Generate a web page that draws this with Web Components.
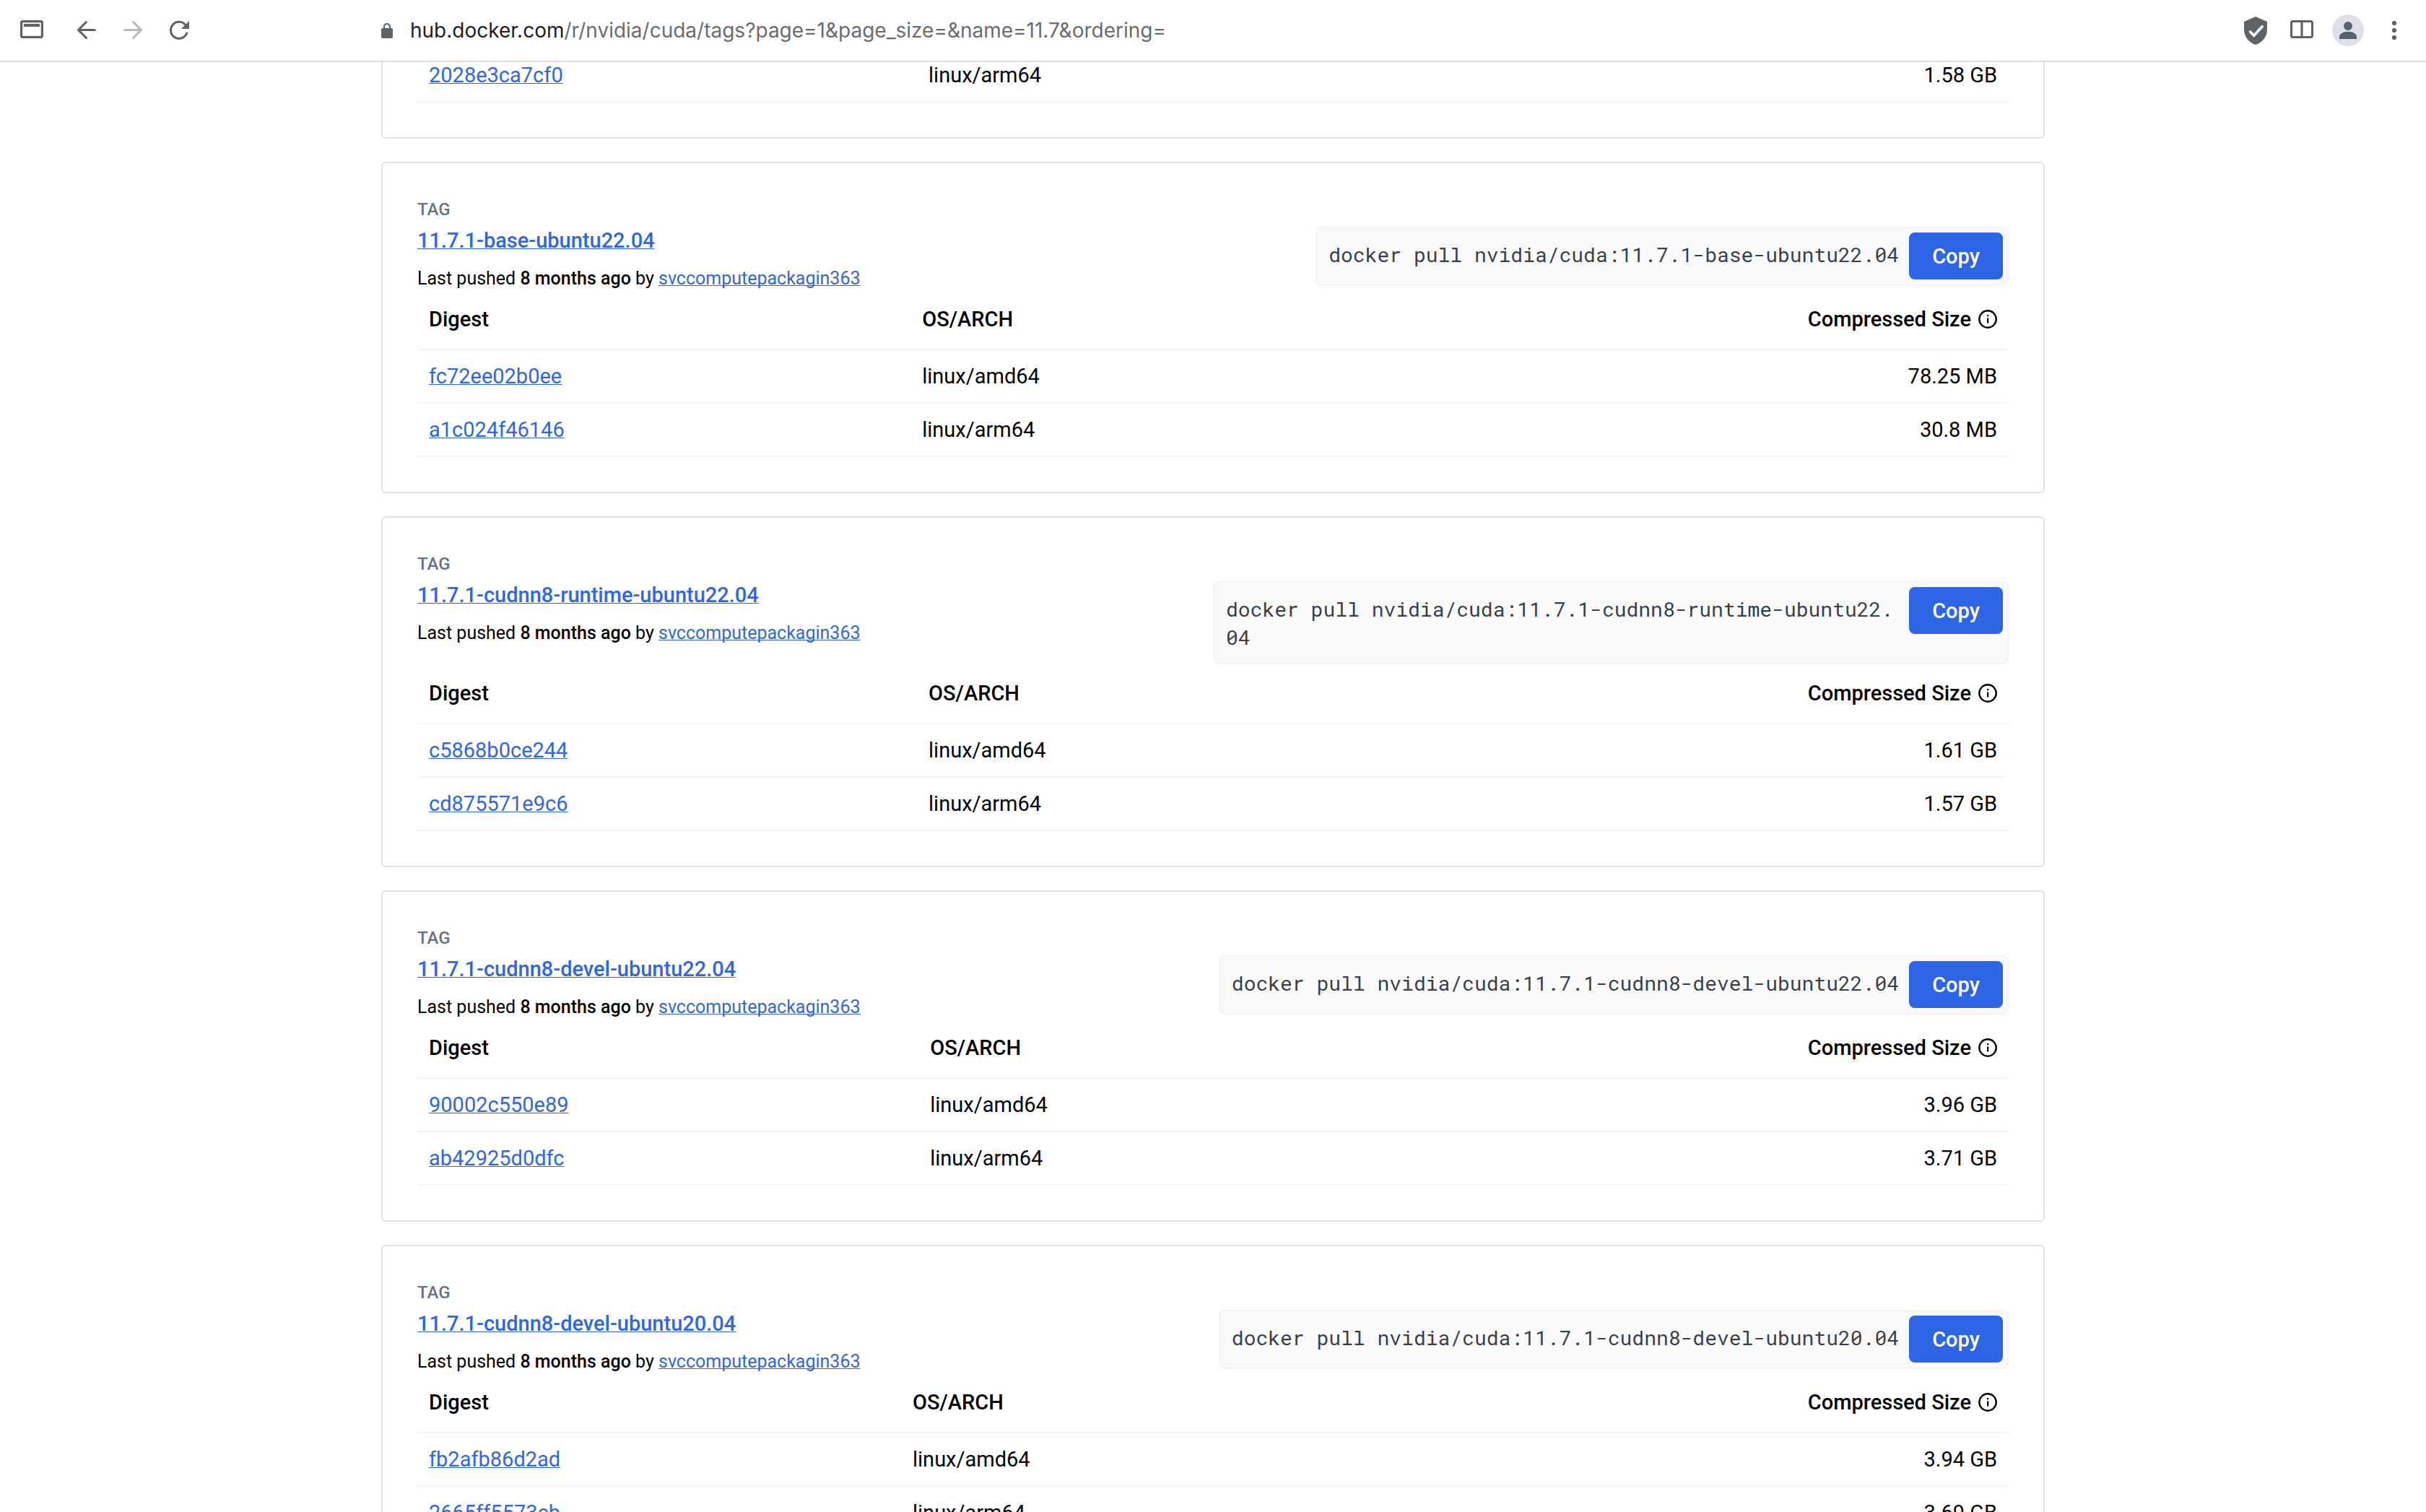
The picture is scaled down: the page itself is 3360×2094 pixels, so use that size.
<!DOCTYPE html>
<html lang="en">
<head>
<meta charset="utf-8">
<title>nvidia/cuda Tags | Docker Hub</title>
<style>
  html, body { margin: 0; height: 100%; background: #fff; }
  body {
    font-family: Roboto, "Liberation Sans", sans-serif;
    font-size: 29px; line-height: 40px; color: #000;
    --link: #2f66e8; --line: #f4f4f6; --card-line: #e0e1e7; --content: 2304px;
  }
</style>
</head>
<body>
<hub-window>
  <browser-bar slot="bar" host="hub.docker.com" path="/r/nvidia/cuda/tags?page=1&amp;page_size=&amp;name=11.7&amp;ordering="></browser-bar>
</hub-window>

<script>
const TAGS = [
  { partial: true, col: '31.4%', rows: [['2028e3ca7cf0', 'linux/arm64', '1.58 GB']] },
  { name: '11.7.1-base-ubuntu22.04', col: '31%', rows: [['fc72ee02b0ee', 'linux/amd64', '78.25 MB'], ['a1c024f46146', 'linux/arm64', '30.8 MB']] },
  { name: '11.7.1-cudnn8-runtime-ubuntu22.04', col: '31.4%', rows: [['c5868b0ce244', 'linux/amd64', '1.61 GB'], ['cd875571e9c6', 'linux/arm64', '1.57 GB']] },
  { name: '11.7.1-cudnn8-devel-ubuntu22.04', col: '31.5%', rows: [['90002c550e89', 'linux/amd64', '3.96 GB'], ['ab42925d0dfc', 'linux/arm64', '3.71 GB']] },
  { name: '11.7.1-cudnn8-devel-ubuntu20.04', col: '30.4%', rows: [['fb2afb86d2ad', 'linux/amd64', '3.94 GB'], ['2665ff5573cb', 'linux/arm64', '3.69 GB']] }
];

class BrowserBar extends HTMLElement {
  constructor() {
    super();
    const root = this.attachShadow({ mode: 'open' });
    root.innerHTML = `
      <style>
        :host { display: grid; grid-template-columns: 1fr minmax(0, var(--content)) 1fr; align-items: center;
                height: 84px; border-bottom: 2px solid #dcdcde; background: #fff; color: #5f6368; }
        nav, .tools { display: flex; align-items: center; gap: 32px; }
        nav { padding-left: 28px; }
        nav button:first-child { margin-right: 12px; }
        .tools { justify-content: flex-end; gap: 26px; padding-right: 28px; }
        .tools button:first-child { margin-right: 6px; }
        button { all: unset; display: block; cursor: pointer; }
        button:disabled { color: #bababc; }
        svg { display: block; }
        .address { display: flex; align-items: center; gap: 24px; min-width: 0; }
        .url { font-size: 28px; line-height: 40px; white-space: nowrap; color: #6b6c6f;
               font-family: Inter, Roboto, sans-serif; }
        .host { color: #202124; }
      </style>
      <nav aria-label="Browser">
        <button aria-label="Window"><svg width="32" height="44" viewBox="28 20 32 44"><rect x="29.600" y="29.600" width="28.800" height="21.800" rx="2" fill="none" stroke="currentColor" stroke-width="3.200"/><path d="M33 33h22v4h-22z" fill="currentColor"/></svg></button>
        <button aria-label="Back"><svg width="32" height="44" viewBox="104 20 32 44" fill="none" stroke="currentColor" stroke-width="3" stroke-linecap="round"><path d="M131.500 41.500H109M119.500 30.500L108.500 41.500L119.500 52.500"/></svg></button>
        <button aria-label="Forward" disabled><svg width="32" height="44" viewBox="168 20 32 44" fill="none" stroke="currentColor" stroke-width="3" stroke-linecap="round"><path d="M172.500 41.500H195M184.500 30.500L195.500 41.500L184.500 52.500"/></svg></button>
        <button aria-label="Reload"><svg width="32" height="44" viewBox="232 20 32 44"><path d="M257 34.700A11.500 11.500 0 1 0 258.700 46" fill="none" stroke="currentColor" stroke-width="3" stroke-linecap="round"/><path d="M262 29v11h-11z" fill="currentColor"/></svg></button>
      </nav>
      <div class="address">
        <svg width="16" height="44" viewBox="528 20 16 44"><rect x="528" y="39" width="16" height="14" rx="2" fill="currentColor"/><path d="M532 40v-3a4 4 0 0 1 8 0v3" fill="none" stroke="currentColor" stroke-width="2.200"/></svg>
        <div class="url" role="textbox" aria-label="Address" tabindex="0"><span class="host"></span><span class="path"></span></div>
      </div>
      <div class="tools">
        <button aria-label="Protection"><svg width="32" height="44" viewBox="3108 20 32 44"><path d="M3124 23l16 7v11c0 10-7 18-16 21c-9-3-16-11-16-21v-11z" fill="currentColor"/><path d="M3116.500 44l5.200 5.200l11.500-12.400" fill="none" stroke="#fff" stroke-width="3.600" stroke-linecap="round"/></svg></button>
        <button aria-label="Side panel"><svg width="32" height="44" viewBox="3172 20 32 44"><path d="M3175.500 29.500h25a2 2 0 0 1 2 2v18a2 2 0 0 1-2 2h-25a2 2 0 0 1-2-2v-18a2 2 0 0 1 2-2zM3188 29.500v22" fill="none" stroke="currentColor" stroke-width="3.200"/></svg></button>
        <button aria-label="Profile"><svg width="44" height="44" viewBox="0 0 44 44"><circle cx="22" cy="22" r="22" fill="#dfe0e6"/><circle cx="22" cy="16" r="6" fill="#586073"/><path d="M10 34v-3c0-4.500 6-7.300 12-7.300s12 2.800 12 7.300v3z" fill="#586073"/></svg></button>
        <button aria-label="Menu"><svg width="32" height="44" viewBox="3300 20 32 44" fill="currentColor"><circle cx="3316" cy="32" r="3.100"/><circle cx="3316" cy="42" r="3.100"/><circle cx="3316" cy="52" r="3.100"/></svg></button>
      </div>`;
  }
  connectedCallback() {
    this.shadowRoot.querySelector('.host').textContent = this.getAttribute('host');
    this.shadowRoot.querySelector('.path').textContent = this.getAttribute('path');
  }
}

class PullCommand extends HTMLElement {
  constructor() {
    super();
    this.attachShadow({ mode: 'open' }).innerHTML = `
      <style>
        :host { display: flex; align-items: flex-start; gap: 14px; box-sizing: border-box; max-width: 50%;
                margin-top: 40px; padding: 6px 6px 7px 16px; border: 2px solid #f3f3f4; border-radius: 8px; background: #f9f9fa; }
        code { padding: 11px 0 9px; font: 28px/39px "Roboto Mono", "Liberation Mono", monospace; color: #393f49; word-break: break-all; }
        button { flex: none; width: 130px; height: 65px; padding: 0; border: 0; border-radius: 8px;
                 background: #2e65e5; color: #fff; font: 500 29px/40px Roboto, sans-serif; }
      </style>
      <code><slot></slot></code><button type="button">Copy</button>`;
  }
}

class TagCard extends HTMLElement {
  constructor() {
    super();
    this.attachShadow({ mode: 'open' });
  }
  set tag(t) {
    const head = t.partial ? '' : `
      <header>
        <div>
          <p class="label">TAG</p>
          <a class="name" href="#${t.name}">${t.name}</a>
          <p class="pushed">Last pushed <strong>8 months ago</strong> by <a href="#svccomputepackagin363">svccomputepackagin363</a></p>
        </div>
        <pull-command>docker pull nvidia/cuda:${t.name}</pull-command>
      </header>`;
    const thead = t.partial ? '' : `
      <thead><tr><th>Digest</th><th>OS/ARCH</th><th><span class="size">Compressed Size
        <svg width="26" height="26" viewBox="0 0 26 26" role="img" aria-label="Info"><circle cx="13" cy="13" r="11.700" fill="none" stroke="#000" stroke-width="2.400"/><path d="M12 11.500h2.200v7h-2.200zM12 7h2.200v2.200h-2.200z"/></svg></span></th></tr></thead>`;
    this.shadowRoot.innerHTML = `
      <style>
        :host { display: block; padding: 48px; border: 2px solid var(--card-line); border-radius: 6px; background: #fff; }
        :host([partial]) { padding-top: 0; border-top: 0; border-radius: 0 0 6px 6px; }
        header { display: flex; justify-content: space-between; align-items: flex-start; }
        p { margin: 0; line-height: 32px; }
        .label { font-size: 24px; font-weight: 500; color: #677285; }
        .name { display: block; margin: 6px 0 16px; line-height: 42px; font-weight: 500; }
        .pushed { font-size: 25px; }
        strong { font-weight: 500; }
        a { color: var(--link); text-decoration: underline 1px; text-decoration-skip-ink: none; }
        table { width: 100%; table-layout: fixed; border-collapse: separate; border-spacing: 0; }
        th, td { padding: 16px; border-bottom: 2px solid var(--line); text-align: left; line-height: 40px; font-weight: 400; }
        th { padding: 20px 16px 21px; font-weight: 500; }
        col:first-child { width: var(--digest-col); }
        th:last-child, td:last-child { text-align: right; }
        .size { display: flex; justify-content: flex-end; align-items: center; gap: 10px; }
      </style>
      ${head}
      <table>
        <colgroup><col><col><col></colgroup>
        ${thead}
        <tbody>${t.rows.map(([d, o, s]) => `<tr><td><a href="#${d}">${d}</a></td><td>${o}</td><td>${s}</td></tr>`).join('')}</tbody>
      </table>`;
    this.style.setProperty('--digest-col', t.col);
    this.toggleAttribute('partial', !!t.partial);
  }
}

class HubWindow extends HTMLElement {
  constructor() {
    super();
    this.attachShadow({ mode: 'open' }).innerHTML = `
      <style>
        :host { display: flex; flex-direction: column; height: 100vh; }
        main { flex: 1; min-height: 0; overflow-y: auto; scrollbar-width: none; }
        .list { display: flex; flex-direction: column; gap: 32px; max-width: var(--content); margin: -18px auto 32px; }
      </style>
      <slot name="bar"></slot>
      <main><div class="list"><slot></slot></div></main>`;
  }
  connectedCallback() {
    if (this.querySelector('tag-card')) return;
    this.append(...TAGS.map(t => {
      const card = document.createElement('tag-card');
      card.tag = t;
      return card;
    }));
  }
}

customElements.define('browser-bar', BrowserBar);
customElements.define('pull-command', PullCommand);
customElements.define('tag-card', TagCard);
customElements.define('hub-window', HubWindow);
</script>
</body>
</html>
